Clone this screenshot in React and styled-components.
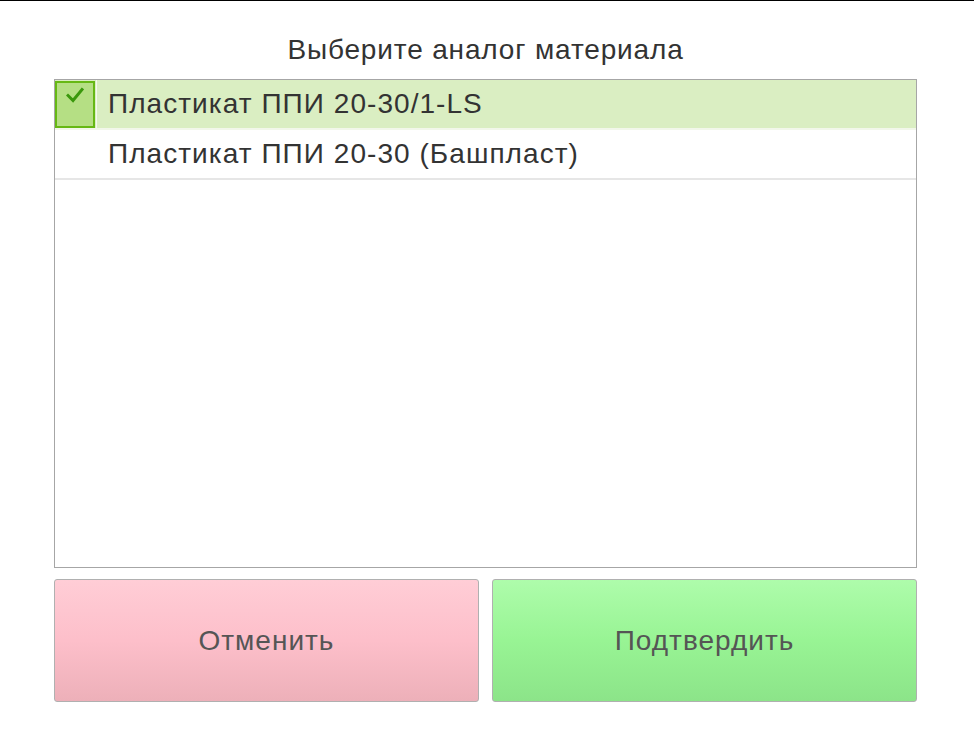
import React from "react";
import styled, { createGlobalStyle } from "styled-components";

const GlobalStyle = createGlobalStyle`
  html, body {
    margin: 0;
    padding: 0;
    background: #ffffff;
    font-family: "Liberation Sans", Arial, sans-serif;
  }
`;

const Page = styled.div`
  border-top: 1px solid #000;
  width: 974px;
  height: 729px;
  padding: 0 57px 0 54px;
  box-sizing: border-box;
  display: flex;
  flex-direction: column;
`;

const Title = styled.h1`
  margin: 34px 0 14px;
  font-size: 28px;
  letter-spacing: 0.85px;
  line-height: 30px;
  font-weight: normal;
  color: #333;
  text-align: center;
`;

const List = styled.ul`
  margin: 0;
  padding: 0;
  list-style: none;
  height: 489px;
  box-sizing: border-box;
  border: 1px solid #a6a6a6;
`;

const Row = styled.li`
  display: flex;
  align-items: center;
  height: 50px;
  box-sizing: border-box;
  border-bottom: 2px solid #e6e6e6;
  background: ${(p) => (p.$selected ? "#daeec2" : "#fff")};
  border-bottom-color: ${(p) => (p.$selected ? "#f2f7ea" : "#e6e6e6")};
`;

const CheckCell = styled.div`
  width: 42px;
  height: 48px;
  box-sizing: border-box;
  padding: 1px 1px 0 0;
  border-right: 1px solid ${(p) => (p.$selected ? "#f4f9ee" : "transparent")};
  flex-shrink: 0;
`;

const CheckBox = styled.div`
  width: 100%;
  height: 100%;
  box-sizing: border-box;
  border: 2px solid #66b814;
  background: #b5df84;
  display: flex;
  justify-content: center;
  align-items: flex-start;
  padding-top: 4px;
`;

const Label = styled.span`
  margin-left: 11px;
  font-size: 28px;
  letter-spacing: 1.05px;
  color: #333;
  white-space: nowrap;
`;

const Buttons = styled.div`
  display: grid;
  grid-template-columns: 1fr 1fr;
  gap: 13px;
  margin-top: 11px;
  height: 123px;
`;

const Button = styled.button`
  font-family: inherit;
  font-size: 28px;
  letter-spacing: 1px;
  color: #555;
  border: 1px solid #b0b0b0;
  border-radius: 3px;
  cursor: pointer;
  background: ${(p) =>
    p.$variant === "confirm"
      ? "linear-gradient(to bottom, #aefcab 0%, #98f494 50%, #8ce489 100%)"
      : "linear-gradient(to bottom, #ffcdd6 0%, #fdbfca 50%, #edb0b9 100%)"};
`;

const Check = () => (
  <svg width="18" height="16" viewBox="0 0 18 16">
    <path
      d="M2 8.5 L7 13.5 L16 2.5"
      fill="none"
      stroke="#3a980c"
      strokeWidth="3"
      strokeLinecap="square"
    />
  </svg>
);

const items = [
  { id: 1, name: "Пластикат ППИ 20-30/1-LS", selected: true },
  { id: 2, name: "Пластикат ППИ 20-30 (Башпласт)", selected: false },
];

export default function App() {
  return (
    <>
      <GlobalStyle />
      <Page>
        <Title>Выберите аналог материала</Title>
        <List>
          {items.map((it) => (
            <Row key={it.id} $selected={it.selected}>
              <CheckCell $selected={it.selected}>
                {it.selected && (
                  <CheckBox>
                    <Check />
                  </CheckBox>
                )}
              </CheckCell>
              <Label>{it.name}</Label>
            </Row>
          ))}
        </List>
        <Buttons>
          <Button>Отменить</Button>
          <Button $variant="confirm">Подтвердить</Button>
        </Buttons>
      </Page>
    </>
  );
}
